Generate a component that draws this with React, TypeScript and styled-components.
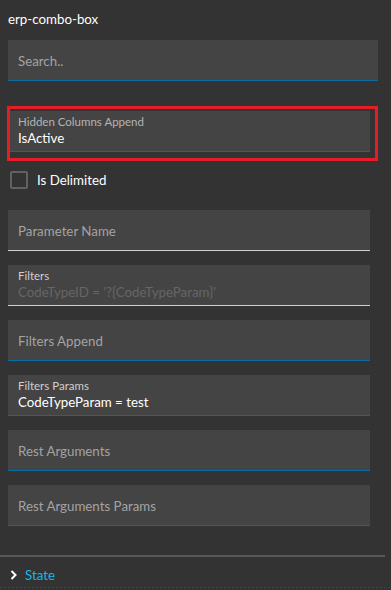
import styled, { createGlobalStyle } from 'styled-components'

const colors = {
  page: '#333333',
  field: '#444444',
  placeholder: '#a3a3a3',
  label: '#b4b4b4',
  muted: '#666666',
  text: '#ffffff',
  blue: '#0a6aa1',
  light: '#cfcfcf',
  red: '#e51d27',
  link: '#1ab3e8',
}

const GlobalStyle = createGlobalStyle`
  html, body {
    margin: 0;
    padding: 0;
    background: ${colors.page};
  }
  body {
    font-family: Lato, "Liberation Sans", sans-serif;
    color: ${colors.text};
  }
`

const Page = styled.div`
  width: 391px;
  height: 590px;
  overflow: hidden;
  display: flex;
  flex-direction: column;
`

const Content = styled.div`
  width: 385px;
  padding: 10px 0 0 8px;
  box-sizing: border-box;
  display: flex;
  flex-direction: column;
`

const Title = styled.div`
  font-size: 13.3px;
  line-height: 18px;
  height: 18px;
  margin-bottom: 12px;
`

const FieldBox = styled.div<{ $line: 'blue' | 'light'; $width: number; $inset: number }>`
  width: ${p => p.$width}px;
  height: 41px;
  box-sizing: border-box;
  background: ${colors.field};
  border-bottom: 1px solid ${p => (p.$line === 'blue' ? colors.blue : colors.light)};
  padding: 0 10px 0 ${p => p.$inset}px;
  display: flex;
  flex-direction: column;
  justify-content: center;
`

const Placeholder = styled.div`
  font-size: 13.3px;
  line-height: 18px;
  color: ${colors.placeholder};
  padding-top: 2px;
`

const Label = styled.div<{ $bright?: boolean }>`
  font-size: 11.5px;
  line-height: 14px;
  color: ${p => (p.$bright ? '#cfcfcf' : colors.label)};
`

const Value = styled.div<{ $muted?: boolean }>`
  font-size: 13.3px;
  line-height: 18px;
  color: ${p => (p.$muted ? colors.muted : colors.text)};
`

const Highlight = styled.div`
  width: 371px;
  margin: 0 0 0 -1px;
  box-sizing: border-box;
  border: 3px solid ${colors.red};
  padding: 2px 5px 6px 0;
`

const Spacer = styled.div<{ $h: number }>`
  height: ${p => p.$h}px;
`

const CheckRow = styled.label`
  display: flex;
  align-items: center;
  gap: 9px;
  height: 18px;
  margin: 10px 0 21px 2px;
  font-size: 13.3px;
`

const CheckBox = styled.span`
  width: 18px;
  height: 18px;
  box-sizing: border-box;
  border: 2px solid #616161;
  border-radius: 2px;
`

const FieldList = styled.div`
  display: flex;
  flex-direction: column;
  gap: 14px;
`

const Separator = styled.div`
  width: 385px;
  height: 2px;
  background: #585858;
  margin-top: 29px;
`

const StateRow = styled.div`
  display: flex;
  align-items: center;
  gap: 8px;
  height: 18px;
  padding: 9px 0 0 10px;
  font-size: 13.3px;
  color: ${colors.link};
`

const Dotted = styled.div`
  margin-top: 3px;
  width: 391px;
  height: 1px;
  background: repeating-linear-gradient(90deg, #444 0 2px, transparent 2px 4px);
`

type FieldProps = {
  label?: string
  value?: string
  placeholder?: string
  muted?: boolean
  bright?: boolean
  line?: 'blue' | 'light'
  width?: number
  inset?: number
}

const Field = ({ label, value, placeholder, muted, bright, line = 'blue', width = 362, inset = 10 }: FieldProps) => (
  <FieldBox $line={line} $width={width} $inset={inset}>
    {label ? (
      <>
        <Label $bright={bright}>{label}</Label>
        <Value $muted={muted}>{value}</Value>
      </>
    ) : (
      <Placeholder>{placeholder}</Placeholder>
    )}
  </FieldBox>
)

export default function App() {
  return (
    <Page>
      <GlobalStyle />
      <Content>
        <Title>erp-combo-box</Title>
        <Field placeholder="Search.." width={370} />
        <Spacer $h={25} />
        <Highlight>
          <Field label="Hidden Columns Append" value="IsActive" width={360} inset={8} />
        </Highlight>
        <CheckRow>
          <CheckBox />
          Is Delimited
        </CheckRow>
        <FieldList>
          <Field placeholder="Parameter Name" line="light" />
          <Field label="Filters" value="CodeTypeID = '?{CodeTypeParam}'" muted bright line="light" />
          <Field placeholder="Filters Append" />
          <Field label="Filters Params" value="CodeTypeParam = test" bright />
          <Field placeholder="Rest Arguments" />
          <Field placeholder="Rest Arguments Params" />
        </FieldList>
      </Content>
      <Separator />
      <StateRow>
        <svg width="7" height="10" viewBox="0 0 7 10">
          <path d="M1.5 1 L5.5 5 L1.5 9" stroke="#fff" strokeWidth="2" fill="none" />
        </svg>
        State
      </StateRow>
      <Dotted />
    </Page>
  )
}
